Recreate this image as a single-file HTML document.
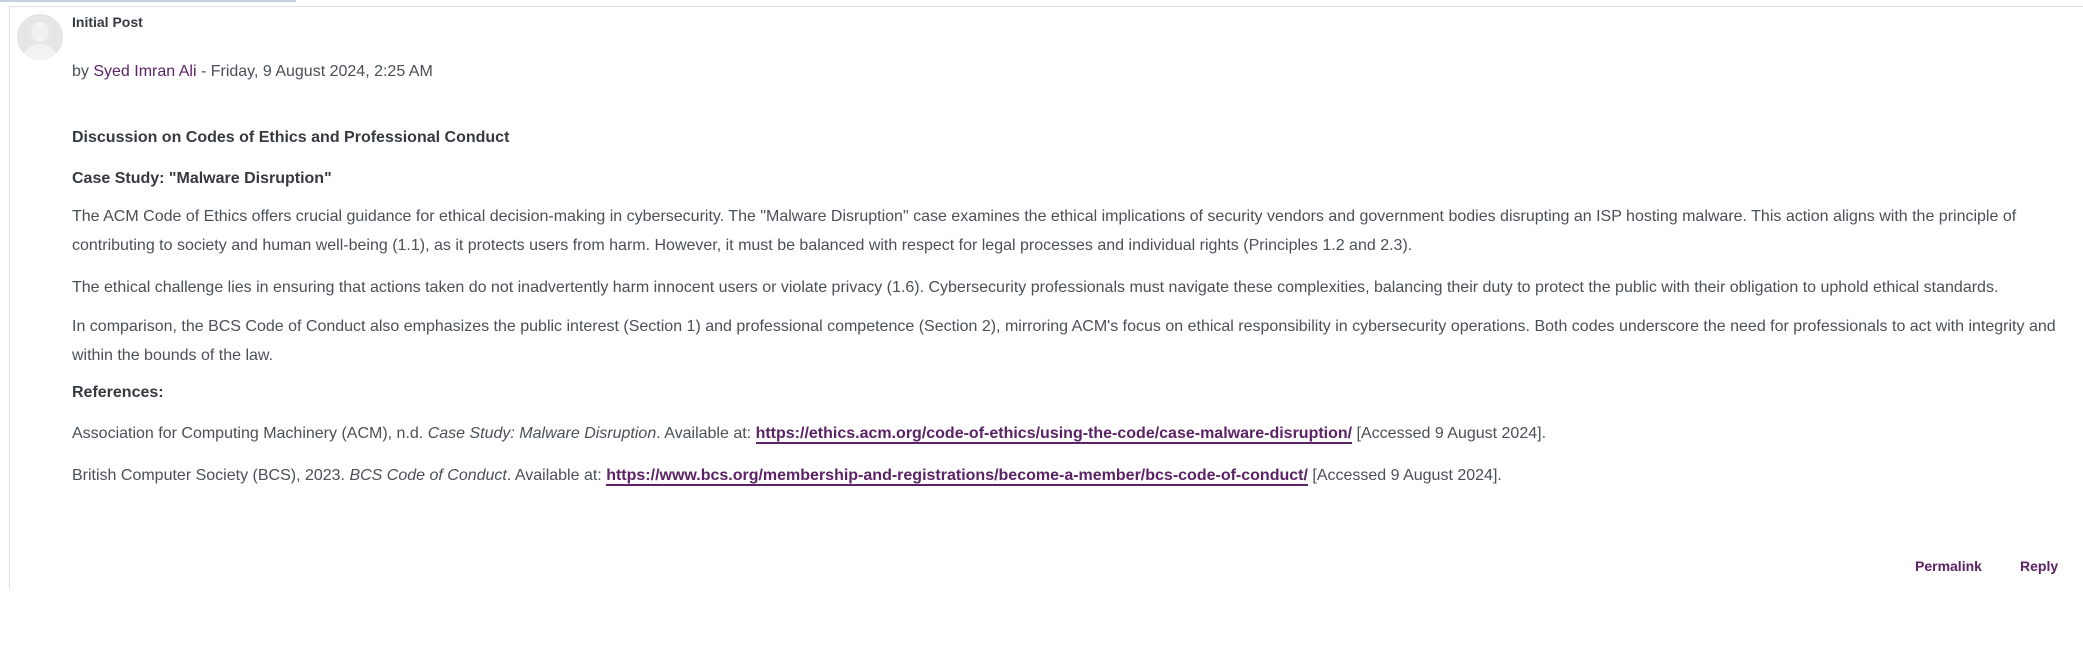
<!DOCTYPE html>
<html><head><meta charset="utf-8"><style>
body{margin:0;width:2083px;height:648px;background:#fff;font-family:"Liberation Sans",Arial,sans-serif;color:#495057;position:relative;overflow:hidden}
.tab{position:absolute;left:0;top:0;width:296px;height:2px;background:#c8d0dc}
.box{position:absolute;left:9px;top:6px;width:2074px;height:582px;border-top:1px solid #dee2e6;border-left:1px solid #dee2e6}
.av{position:absolute;left:17px;top:14px;width:46px;height:46px;border-radius:50%;background:#e6e6e6;overflow:hidden}
.av:before{content:"";position:absolute;left:14px;top:8px;width:18px;height:20px;border-radius:50%;background:#f2f2f2}
.av:after{content:"";position:absolute;left:6px;top:30px;width:34px;height:30px;border-radius:50%;background:#f2f2f2}
.t{position:absolute;left:72px;white-space:nowrap;font-size:16px}
.b{font-weight:bold;color:#343a40}
a{color:#5b2266;text-decoration:none}
.u{font-weight:bold;border-bottom:2px solid #5b2266;color:#5b2266}
p{position:absolute;left:72px;width:1990px;margin:0;font-size:16px;line-height:29px}
</style></head><body>
<div class="tab"></div>
<div class="box"></div>
<div class="av"></div>
<div class="t b" style="top:14px;font-size:14px">Initial Post</div>
<div class="t" style="top:63px">by <a>Syed Imran Ali</a> - Friday, 9 August 2024, 2:25 AM</div>
<div class="t b" style="top:129px">Discussion on Codes of Ethics and Professional Conduct</div>
<div class="t b" style="top:170px">Case Study: "Malware Disruption"</div>
<p style="top:202px">The ACM Code of Ethics offers crucial guidance for ethical decision-making in cybersecurity. The "Malware Disruption" case examines the ethical implications of security vendors and government bodies disrupting an ISP hosting malware. This action aligns with the principle of contributing to society and human well-being (1.1), as it protects users from harm. However, it must be balanced with respect for legal processes and individual rights (Principles 1.2 and 2.3).</p>
<p style="top:273px">The ethical challenge lies in ensuring that actions taken do not inadvertently harm innocent users or violate privacy (1.6). Cybersecurity professionals must navigate these complexities, balancing their duty to protect the public with their obligation to uphold ethical standards.</p>
<p style="top:312px">In comparison, the BCS Code of Conduct also emphasizes the public interest (Section 1) and professional competence (Section 2), mirroring ACM's focus on ethical responsibility in cybersecurity operations. Both codes underscore the need for professionals to act with integrity and within the bounds of the law.</p>
<div class="t b" style="top:384px">References:</div>
<div class="t" style="top:425px">Association for Computing Machinery (ACM), n.d. <i>Case Study: Malware Disruption</i>. Available at: <span class="u">https://ethics.acm.org/code-of-ethics/using-the-code/case-malware-disruption/</span> [Accessed 9 August 2024].</div>
<div class="t" style="top:467px">British Computer Society (BCS), 2023. <i>BCS Code of Conduct</i>. Available at: <span class="u">https://www.bcs.org/membership-and-registrations/become-a-member/bcs-code-of-conduct/</span> [Accessed 9 August 2024].</div>
<div class="t b" style="left:1915px;top:558px;font-size:14px;color:#5b2266">Permalink</div>
<div class="t b" style="left:2020px;top:558px;font-size:14px;color:#5b2266">Reply</div>
</body></html>
